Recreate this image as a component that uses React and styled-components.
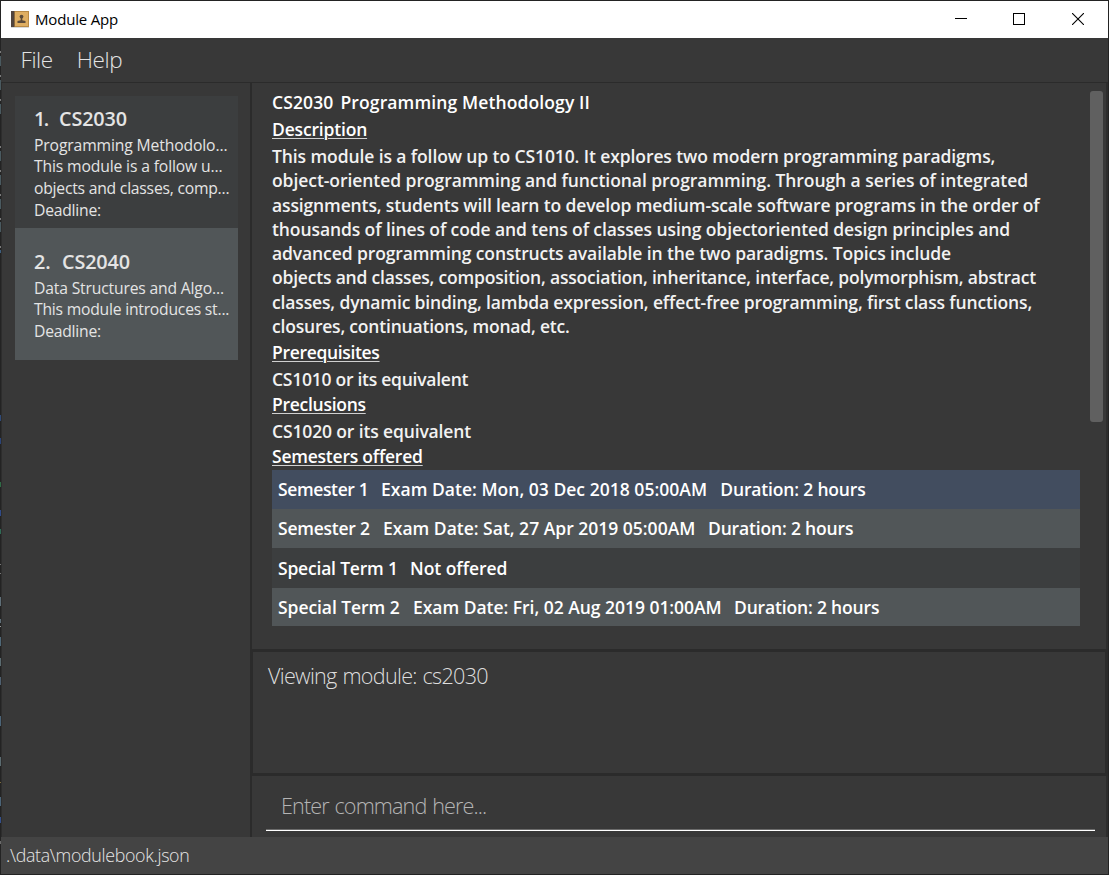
import React from "react";
import styled, { createGlobalStyle } from "styled-components";

const GlobalStyle = createGlobalStyle`
  *, *::before, *::after { box-sizing: border-box; }
  body {
    margin: 0;
    background: #232323;
    overflow: hidden;
    font-family: "Open Sans", "Noto Sans", sans-serif;
  }
`;

/* Slivers of the editor that sits behind the window: [top, height, colour] */
const slivers = [
  [51, 2, "#7b7b7b"], [56, 10, "#4a5a60"], [75, 2, "#7b7b7b"], [80, 10, "#4a5a60"],
  [99, 2, "#7b7b7b"], [104, 10, "#4a5a60"], [146, 2, "#7b7b7b"], [151, 10, "#4a5a60"],
  [170, 2, "#7b7b7b"], [175, 10, "#4a5a60"], [194, 2, "#7b7b7b"], [199, 10, "#4a5a60"],
  [218, 2, "#7b7b7b"], [222, 10, "#4a5a60"], [246, 2, "#7b7b7b"], [250, 3, "#3d5f80"],
  [415, 6, "#2f4a78"], [438, 6, "#2b4478"], [482, 5, "#2f6b45"], [510, 6, "#2f4a88"],
  [529, 5, "#2f6b55"], [564, 1, "#777777"], [573, 1, "#777777"], [597, 9, "#5f6f78"],
  [619, 4, "#5f6f78"], [626, 1, "#999999"], [637, 9, "#4f6878"], [658, 8, "#5b6b70"],
  [677, 8, "#4f6070"], [716, 10, "#4b6478"], [757, 9, "#5b6b70"], [782, 1, "#7a6a3a"],
  [797, 9, "#4b6478"], [817, 6, "#34508c"], [841, 3, "#6b6b6b"],
];

const Desktop = styled.div`
  display: flex;
  width: 1109px;
  height: 875px;
  padding: 1px 1px 1px 0;
  background: #232323;
`;

const EdgeStrip = styled.div`
  flex: none;
  width: 1px;
  margin-top: -1px;
  background-color: #232323;
  background-repeat: no-repeat;
  background-image: ${slivers.map(([, , c]) => `linear-gradient(${c}, ${c})`).join(",")};
  background-position: ${slivers.map(([y]) => `0 ${y}px`).join(",")};
  background-size: ${slivers.map(([, h]) => `1px ${h}px`).join(",")};
`;

const Window = styled.div`
  flex: 1;
  min-width: 0;
  display: flex;
  flex-direction: column;
  background: #383838;
`;

const TitleBar = styled.header`
  flex: none;
  height: 37px;
  display: flex;
  align-items: center;
  background: #ffffff;
  color: #000000;
  padding: 0 1px 0 10px;
`;

const AppTitle = styled.h1`
  flex: 1;
  margin: -2px 0 0 6px;
  font-size: 15px;
  font-weight: 400;
  line-height: 22px;
  letter-spacing: -0.18px;
`;

const WindowButton = styled.button`
  width: 58.5px;
  height: 37px;
  padding: 0 0 2px;
  border: 0;
  background: none;
  display: grid;
  place-items: center;

  svg { display: block; }
`;

const MenuBar = styled.nav`
  flex: none;
  height: 45px;
  display: flex;
  gap: 24px;
  padding: 6px 0 0 19.5px;
  border-bottom: 1px solid #2b2b2b;
`;

const MenuItem = styled.span`
  font-size: 22.5px;
  font-weight: 300;
  line-height: 32px;
  letter-spacing: -0.4px;
  color: #e4e4e4;
`;

const Body = styled.div`
  flex: none;
  height: 754px;
  display: flex;
`;

const Sidebar = styled.aside`
  flex: none;
  width: 251px;
  padding: 13px 12px 0 13px;
  border-left: 1px solid #2d2d2d;
  border-right: 2px solid #2b2b2b;
`;

const ModuleCard = styled.article`
  height: 132px;
  padding: 2.5px 0 0 19px;
  display: flex;
  flex-direction: column;
  justify-content: center;
  color: #e4e4e4;
  background: ${(p) => (p.$alternate ? "#515658" : "#3c3e3f")};
`;

const CardHeading = styled.h2`
  display: flex;
  margin: 0 0 2px;
  font-size: 19.8px;
  font-weight: 600;
  line-height: 28px;
  letter-spacing: -0.12px;
`;

const CardIndex = styled.span`
  width: ${(p) => p.$width}px;
  letter-spacing: ${(p) => p.$tracking}px;
`;

const CardLine = styled.p`
  margin: 0;
  font-size: 15.7px;
  line-height: 21.8px;
  letter-spacing: ${(p) => p.$tracking}px;
  white-space: nowrap;
`;

const Content = styled.main`
  flex: 1;
  min-width: 0;
  display: flex;
  flex-direction: column;
`;

const DetailPane = styled.section`
  flex: none;
  height: 566px;
  display: flex;
  justify-content: space-between;
  padding: 8px 3px 0 20px;
  border-right: 2px solid #2d2d2d;
`;

const Detail = styled.div`
  width: 808px;
  color: #f2f2f2;
  font-size: 17.5px;
  font-weight: 600;
  line-height: 23px;
`;

const DetailTitle = styled.h2`
  display: flex;
  gap: 7px;
  height: 27px;
  margin: 0;
  font: inherit;
  color: #ffffff;
  letter-spacing: 0.12px;
`;

const DetailLabel = styled.h3`
  height: ${(p) => p.$height}px;
  margin: 0;
  font: inherit;
  color: #ffffff;
  letter-spacing: ${(p) => p.$tracking}px;
  text-decoration: underline;
  text-decoration-color: #d0d0d0;
  text-decoration-thickness: 1px;
  text-underline-offset: 2px;
`;

const DetailText = styled.div`
  height: ${(p) => p.$height}px;
  letter-spacing: ${(p) => p.$tracking || 0}px;
`;

const TextLine = styled.div`
  height: 24.3px;
  letter-spacing: ${(p) => p.$tracking}px;
  white-space: nowrap;
`;

const rowColours = { selected: "#424d5f", odd: "#515658", even: "#3c3e3f" };

const SemesterRow = styled.div`
  display: flex;
  align-items: center;
  height: ${(p) => p.$height}px;
  padding: 0 0 0 6px;
  color: #ffffff;
  white-space: nowrap;
  background: ${(p) => rowColours[p.$tone]};
`;

const SemesterCell = styled.span`
  width: ${(p) => p.$width}px;
  letter-spacing: ${(p) => p.$tracking}px;
`;

const ScrollThumb = styled.div`
  width: 13px;
  height: 331px;
  border-radius: 3px;
  background: #606060;
`;

const ResultPane = styled.section`
  flex: none;
  height: 127px;
  padding: 8px 0 0 15px;
  border: solid #2b2b2b;
  border-width: 3px 3px 3px 1px;
`;

const ResultText = styled.p`
  margin: 0;
  font-size: 21.6px;
  font-weight: 300;
  line-height: 32px;
  letter-spacing: -0.72px;
  word-spacing: 1px;
  color: #dedede;
`;

const CommandPane = styled.section`
  flex: 1;
  padding: 0 11px 6px 14px;
  border-right: 2px solid #2d2d2d;
`;

const CommandField = styled.div`
  height: 55px;
  padding: 14px 0 0 15px;
  border-bottom: 1px solid #ffffff;
  box-shadow: inset 0 -1px 0 #6b6b6b;
  font-size: 21.6px;
  font-weight: 300;
  line-height: 32px;
  letter-spacing: -0.88px;
  word-spacing: 1px;
  color: #b4b4b4;
`;

const StatusBar = styled.footer`
  flex: 1;
  padding: 5px 0 0 5px;
  background: #444444;
  color: #e6e6e6;
  font-size: 17.8px;
  font-weight: 300;
  line-height: 26px;
  letter-spacing: -0.31px;
`;

const modules = [
  {
    index: "1.", indexWidth: 25, indexTracking: -1.6, code: "CS2030", lines: [
      ["Programming Methodolo...", -0.13],
      ["This module is a follow u...", -0.14],
      ["objects and classes, comp...", -0.22],
      ["Deadline:", -0.23],
    ],
  },
  {
    index: "2.", indexWidth: 28, indexTracking: -0.1, code: "CS2040", lines: [
      ["Data Structures and Algo...", -0.17],
      ["This module introduces st...", -0.22],
      ["Deadline:", -0.23],
    ],
  },
];

const description = [
  ["This module is a follow up to CS1010. It explores two modern programming paradigms,", -0.1],
  ["object-oriented programming and functional programming. Through a series of integrated", -0.061],
  ["assignments, students will learn to develop medium-scale software programs in the order of", -0.13],
  ["thousands of lines of code and tens of classes using objectoriented design principles and", -0.096],
  ["advanced programming constructs available in the two paradigms. Topics include", -0.109],
  ["objects and classes, composition, association, inheritance, interface, polymorphism, abstract", -0.194],
  ["classes, dynamic binding, lambda expression, effect-free programming, first class functions,", -0.142],
  ["closures, continuations, monad, etc.", -0.2],
];

const semesters = [
  { tone: "selected", height: 39, cells: [["Semester 1", 103, -0.38], ["Exam Date: Mon, 03 Dec 2018 05:00AM", 339.3, 0.026], ["Duration: 2 hours", 150, -0.17]] },
  { tone: "odd", height: 39, cells: [["Semester 2", 105, -0.24], ["Exam Date: Sat, 27 Apr 2019 05:00AM", 325, 0], ["Duration: 2 hours", 150, -0.17]] },
  { tone: "even", height: 40, cells: [["Special Term 1", 132, -0.2], ["Not offered", 150, -0.04]] },
  { tone: "odd", height: 38, cells: [["Special Term 2", 135, -0.06], ["Exam Date: Fri, 02 Aug 2019 01:00AM", 321, -0.03], ["Duration: 2 hours", 150, -0.17]] },
];

const BookIcon = () => (
  <svg width="18" height="17" viewBox="0 0 18 17">
    <rect x="0" y="15" width="18" height="2" fill="#d9d9d9" />
    <rect x="0" y="0" width="18" height="16" fill="#b98a45" />
    <rect x="4" y="1" width="13" height="14" fill="#dfae62" />
    <rect x="0" y="0" width="3" height="16" fill="#51443d" />
    <rect x="3" y="0" width="1" height="16" fill="#8d6a3c" />
    <circle cx="10.5" cy="5.600" r="1.900" fill="#5b4a3a" />
    <path d="M9.700 7h1.600v2.200l3.200 0.800V12h-8v-2l3.200-0.800z" fill="#5b4a3a" />
  </svg>
);

export default function App() {
  return (
    <>
      <GlobalStyle />
      <Desktop>
        <EdgeStrip />
        <Window>
          <TitleBar>
            <BookIcon />
            <AppTitle>Module App</AppTitle>
            <WindowButton aria-label="Minimize">
              <svg width="12" height="12" shapeRendering="crispEdges"><rect y="5" width="12" height="1" /></svg>
            </WindowButton>
            <WindowButton aria-label="Maximize">
              <svg width="12" height="12" shapeRendering="crispEdges"><rect x="0.5" y="0.5" width="11" height="11" fill="none" stroke="#000" /></svg>
            </WindowButton>
            <WindowButton aria-label="Close">
              <svg width="12" height="12"><path d="M0 0L12 12M12 0L0 12" fill="none" stroke="#000" strokeWidth="1.1" /></svg>
            </WindowButton>
          </TitleBar>
          <MenuBar>
            <MenuItem>File</MenuItem>
            <MenuItem>Help</MenuItem>
          </MenuBar>
          <Body>
            <Sidebar>
              {modules.map((m, i) => (
                <ModuleCard key={m.code} $alternate={i % 2 === 1}>
                  <CardHeading>
                    <CardIndex $width={m.indexWidth} $tracking={m.indexTracking}>{m.index}</CardIndex>
                    {m.code}
                  </CardHeading>
                  {m.lines.map(([text, tracking]) => (
                    <CardLine key={text} $tracking={tracking}>{text}</CardLine>
                  ))}
                </ModuleCard>
              ))}
            </Sidebar>
            <Content>
              <DetailPane>
                <Detail>
                  <DetailTitle><span>CS2030</span><span>Programming Methodology II</span></DetailTitle>
                  <DetailLabel $height={27} $tracking={-0.18}>Description</DetailLabel>
                  <DetailText $height={196}>
                    {description.map(([text, tracking]) => (
                      <TextLine key={text} $tracking={tracking}>{text}</TextLine>
                    ))}
                  </DetailText>
                  <DetailLabel $height={27} $tracking={-0.33}>Prerequisites</DetailLabel>
                  <DetailText $height={25} $tracking={-0.26}>CS1010 or its equivalent</DetailText>
                  <DetailLabel $height={27} $tracking={-0.28}>Preclusions</DetailLabel>
                  <DetailText $height={25} $tracking={-0.14}>CS1020 or its equivalent</DetailText>
                  <DetailLabel $height={25} $tracking={-0.23}>Semesters offered</DetailLabel>
                  {semesters.map((s) => (
                    <SemesterRow key={s.cells[0][0]} $tone={s.tone} $height={s.height}>
                      {s.cells.map(([text, width, tracking]) => (
                        <SemesterCell key={text} $width={width} $tracking={tracking}>{text}</SemesterCell>
                      ))}
                    </SemesterRow>
                  ))}
                </Detail>
                <ScrollThumb />
              </DetailPane>
              <ResultPane>
                <ResultText>Viewing module: cs2030</ResultText>
              </ResultPane>
              <CommandPane>
                <CommandField>Enter command here...</CommandField>
              </CommandPane>
            </Content>
          </Body>
          <StatusBar>.\data\modulebook.json</StatusBar>
        </Window>
      </Desktop>
    </>
  );
}
